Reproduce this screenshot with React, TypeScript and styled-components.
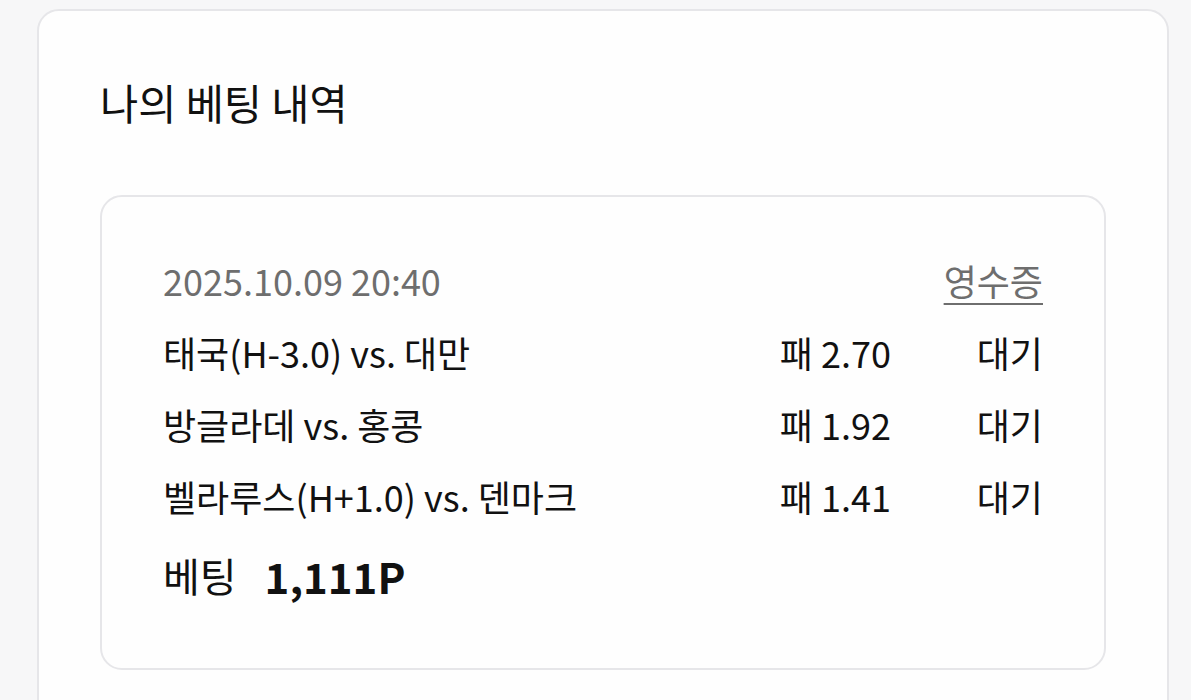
import React from "react";
import styled, { createGlobalStyle } from "styled-components";

const Global = createGlobalStyle`
  html, body { margin: 0; padding: 0; background: #f7f7f8; }
  body { font-family: "Noto Sans CJK KR", "Noto Sans", sans-serif; color: #111; }
`;

const Page = styled.div`
  padding: 9px 22px 0 37px;
  height: 700px;
  box-sizing: border-box;
  overflow: hidden;
`;

const Panel = styled.section`
  background: #fefefe;
  border: 2px solid #e6e6e9;
  border-radius: 22px;
  padding: 64px 61px 60px 61px;
  min-height: 800px;
  box-sizing: border-box;
`;

const Title = styled.h2`
  margin: 0;
  font-size: 41.5px;
  font-weight: 400;
  line-height: 54px;
`;

const BetCard = styled.div`
  margin-top: 66px;
  border: 2px solid #e6e6e9;
  border-radius: 22px;
  padding: 63px 61px 66px 61px;
  background: #fefefe;
`;

const Head = styled.div`
  display: flex;
  justify-content: space-between;
  align-items: center;
  height: 40px;
  margin-bottom: 32px;
`;

const DateText = styled.span`
  font-size: 36px;
  color: #6e6e6e;
`;

const Receipt = styled.a`
  font-size: 36px;
  color: #6e6e6e;
  text-decoration: underline;
  text-underline-offset: 7px;
  text-decoration-thickness: 2px;
`;

const Row = styled.div`
  display: flex;
  align-items: center;
  height: 40px;
  margin-bottom: 32px;
  font-size: 36px;
  white-space: nowrap;
`;

const Match = styled.span`
  flex: 1;
  min-width: 0;
`;

const Odds = styled.span`
  flex: 0 0 111px;
`;

const Status = styled.span`
  flex: 0 0 152px;
  text-align: right;
`;

const Total = styled.div`
  display: flex;
  align-items: center;
  gap: 28px;
  height: 54px;
`;

const TotalLabel = styled.span`
  font-size: 40px;
`;

const TotalValue = styled.span`
  font-size: 42px;
  font-weight: 700;
`;

const bets = [
  { match: "태국(H-3.0) vs. 대만", odds: "패 2.70", status: "대기" },
  { match: "방글라데 vs. 홍콩", odds: "패 1.92", status: "대기" },
  { match: "벨라루스(H+1.0) vs. 덴마크", odds: "패 1.41", status: "대기" },
];

export default function App() {
  return (
    <Page>
      <Global />
      <Panel>
        <Title>나의 베팅 내역</Title>
        <BetCard>
          <Head>
            <DateText>2025.10.09 20:40</DateText>
            <Receipt>영수증</Receipt>
          </Head>
          {bets.map((b) => (
            <Row key={b.match}>
              <Match>{b.match}</Match>
              <Odds>{b.odds}</Odds>
              <Status>{b.status}</Status>
            </Row>
          ))}
          <Total>
            <TotalLabel>베팅</TotalLabel>
            <TotalValue>1,111P</TotalValue>
          </Total>
        </BetCard>
      </Panel>
    </Page>
  );
}
